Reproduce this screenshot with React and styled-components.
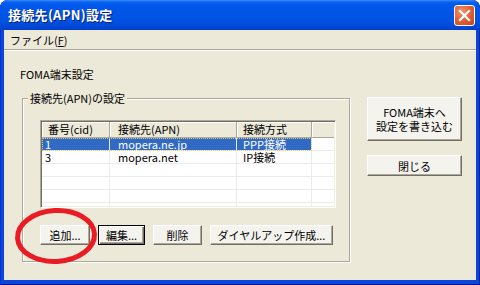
import React from 'react'
import styled, { createGlobalStyle, css } from 'styled-components'

const font = `"Noto Sans CJK JP", "Noto Sans", sans-serif`

const GlobalStyle = createGlobalStyle`
  html, body {
    margin: 0;
    padding: 0;
    background: #fff;
  }
  body {
    font-family: ${font};
  }
`

const columns = [
  { key: 'cid', title: '番号(cid)', width: 68, headPad: 6, cellPad: 3 },
  { key: 'apn', title: '接続先(APN)', width: 127, headPad: 8, cellPad: 8 },
  { key: 'type', title: '接続方式', width: 75, headPad: 6, cellPad: 6 },
]

const rows = [
  { cid: '1', apn: 'mopera.ne.jp', type: 'PPP接続', selected: true },
  { cid: '3', apn: 'mopera.net', type: 'IP接続' },
  {},
  {},
  {},
  {},
]

const App = () => {
  return (
    <>
      <GlobalStyle />
      <Window>
        <TitleBar>
          <TitleText>接続先(APN)設定</TitleText>
          <CloseButton aria-label="閉じる">
            <svg width="19" height="19" viewBox="0 0 19 19">
              <path d="M5 5 L14 14 M14 5 L5 14" stroke="#fff" strokeWidth="2.2" strokeLinecap="square" />
            </svg>
          </CloseButton>
        </TitleBar>
        <Client>
          <MenuBar>
            <MenuItem>ファイル(<u>F</u>)</MenuItem>
          </MenuBar>
          <Separator />
          <Content>
            <LeftColumn>
              <SectionLabel>FOMA端末設定</SectionLabel>
              <Group>
                <GroupCaption>接続先(APN)の設定</GroupCaption>
                <ListView>
                  <Header>
                    {columns.map(c => (
                      <HeaderCell key={c.key} $w={c.width} $pad={c.headPad}>{c.title}</HeaderCell>
                    ))}
                    <HeaderFiller />
                  </Header>
                  <Body>
                    {rows.map((r, i) => (
                      <Row key={i}>
                        <Items $selected={r.selected}>
                          {columns.map(c => (
                            <Cell key={c.key} $w={c.width} $pad={c.cellPad}>{r[c.key]}</Cell>
                          ))}
                        </Items>
                        <FillerCell />
                      </Row>
                    ))}
                  </Body>
                </ListView>
                <ButtonRow>
                  <Button $w={50}>追加...</Button>
                  <Button $w={47} $default>編集...</Button>
                  <Button $w={49}>削除</Button>
                  <Button $w={123}>ダイヤルアップ作成...</Button>
                </ButtonRow>
              </Group>
            </LeftColumn>
            <RightColumn>
              <Button $w={95} $h={44}>FOMA端末へ<br />設定を書き込む</Button>
              <Button $w={95} $h={21}>閉じる</Button>
            </RightColumn>
          </Content>
        </Client>
        <Mark width="86" height="60" viewBox="0 0 86 60">
          <ellipse cx="42" cy="29" rx="38.5" ry="25.5" fill="none" stroke="#EA1B22" strokeWidth="5" transform="rotate(-3 42 29)" />
        </Mark>
      </Window>
    </>
  )
}

const Window = styled.div`
  position: relative;
  width: 480px;
  height: 285px;
  display: flex;
  flex-direction: column;
  background: #0A46DA;
  box-shadow: inset 1px 0 0 #0831D9, inset -1px 0 0 #001EA0, inset 0 -1px 0 #00138C;
  border-radius: 8px 8px 0 0;
  overflow: hidden;
  font-family: ${font};
`

const TitleBar = styled.div`
  flex: none;
  height: 30px;
  box-sizing: border-box;
  display: flex;
  align-items: center;
  justify-content: space-between;
  padding: 0 5px 0 8px;
  background: linear-gradient(to bottom,
    #3A8CF8 0px, #0A62F0 2px, #0058EC 5px, #0055E6 12px,
    #0053E1 20px, #0049D7 26px, #003FCB 30px);
  border-radius: 8px 8px 0 0;
`

const TitleText = styled.span`
  color: #fff;
  font-size: 13px;
  font-weight: bold;
  line-height: 16px;
  letter-spacing: 0.3px;
  text-shadow: 1px 1px 0 #0A1E70;
`

const CloseButton = styled.div`
  width: 21px;
  height: 21px;
  box-sizing: border-box;
  display: flex;
  align-items: center;
  justify-content: center;
  border: 1px solid #fff;
  border-radius: 3px;
  background: radial-gradient(circle at 35% 30%, #F09470 0%, #E2643A 45%, #C83F14 100%);
`

const Client = styled.div`
  flex: 1;
  margin: 0 4px 5px 4px;
  background: #ECE9D8;
  display: flex;
  flex-direction: column;
`

const MenuBar = styled.div`
  height: 19px;
  display: flex;
  align-items: center;
`

const MenuItem = styled.span`
  padding: 0 6px;
  font-size: 11px;
  line-height: 14px;
  color: #000;

  u {
    text-decoration: underline;
  }
`

const Separator = styled.div`
  border-top: 1px solid #ACA899;
  border-bottom: 1px solid #fff;
`

const Content = styled.div`
  flex: 1;
  display: flex;
  align-items: flex-start;
  padding: 16px 0 0 16px;
`

const LeftColumn = styled.div`
  display: flex;
  flex-direction: column;
`

const SectionLabel = styled.div`
  font-size: 11px;
  line-height: 14px;
  color: #000;
`

const Group = styled.div`
  position: relative;
  width: 328px;
  box-sizing: border-box;
  margin: 17px 0 0 2px;
  padding: 21px 13px 16px 17px;
  border: 1px solid #ACA899;
  box-shadow: 1px 1px 0 #fff, inset 1px 1px 0 #fff;
`

const GroupCaption = styled.span`
  position: absolute;
  top: -8px;
  left: 5px;
  padding: 0 2px;
  background: #ECE9D8;
  font-size: 11px;
  line-height: 14px;
  color: #000;
`

const ListView = styled.div`
  width: 296px;
  height: 88px;
  box-sizing: border-box;
  padding: 1px;
  background: #fff;
  border: 1px solid;
  border-color: #ACA899 #fff #fff #ACA899;
  box-shadow: inset 1px 1px 0 #716F64, inset -1px -1px 0 #F1EFE2;
  overflow: hidden;
`

const Header = styled.div`
  display: flex;
  height: 16px;
`

const headerFace = css`
  box-sizing: border-box;
  height: 16px;
  background: #ECE9D8;
  border-right: 1px solid #ACA899;
  border-bottom: 1px solid #ACA899;
  box-shadow: inset 1px 1px 0 #fff;
`

const HeaderCell = styled.div`
  ${headerFace}
  flex: none;
  width: ${p => p.$w}px;
  padding-left: ${p => p.$pad}px;
  font-size: 11px;
  line-height: 14px;
  color: #000;
  white-space: nowrap;
`

const HeaderFiller = styled.div`
  ${headerFace}
  flex: 1;
  border-right: none;
`

const Body = styled.div`
  display: flex;
  flex-direction: column;
`

const Row = styled.div`
  display: flex;
  height: 13px;
`

const Items = styled.div`
  display: flex;
  ${p => p.$selected && css`
    background: #316AC5;
    color: #fff;
    outline: 1px dotted #E9CB7C;
    outline-offset: -1px;
  `}
`

const Cell = styled.div`
  flex: none;
  width: ${p => p.$w}px;
  height: 13px;
  box-sizing: border-box;
  padding-left: ${p => p.$pad}px;
  box-shadow: inset -1px -1px 0 #EBEBEB;
  font-size: 11px;
  line-height: 13px;
  white-space: nowrap;
`

const FillerCell = styled.div`
  flex: 1;
  box-shadow: inset 0 -1px 0 #EBEBEB;
`

const ButtonRow = styled.div`
  display: flex;
  gap: 8px;
  margin-top: 17px;
`

const Button = styled.button`
  flex: none;
  box-sizing: border-box;
  width: ${p => p.$w}px;
  height: ${p => p.$h || 20}px;
  margin: 0;
  padding: 0;
  font-family: ${font};
  font-size: 11px;
  line-height: 14px;
  color: #000;
  text-align: center;
  background: #F4F3EE;
  border: 1px solid;
  border-color: #fff #716F64 #716F64 #fff;
  box-shadow: inset -1px -1px 0 #ACA899;
  ${p => p.$default && css`
    border-color: #000;
    box-shadow: inset 1px 1px 0 #fff, inset -1px -1px 0 #716F64, inset -2px -2px 0 #ACA899;
  `}
`

const RightColumn = styled.div`
  display: flex;
  flex-direction: column;
  gap: 14px;
  margin: 30px 0 0 17px;
`

const Mark = styled.svg`
  position: absolute;
  left: 14px;
  top: 207px;
  pointer-events: none;
`

export default App
